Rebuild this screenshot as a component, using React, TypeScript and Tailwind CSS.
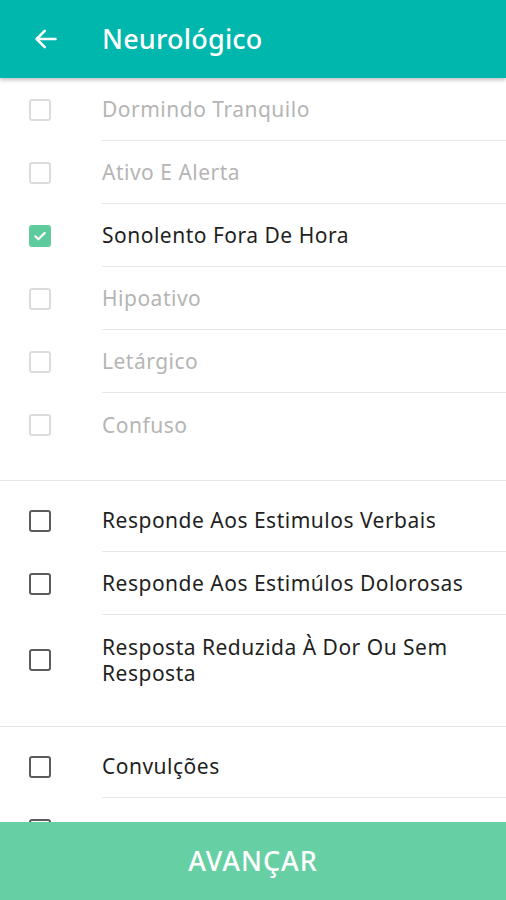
import React, { useState } from 'react';

type Item = { label: string; disabled?: boolean; checked?: boolean; tall?: boolean };

const GROUPS: Item[][] = [
  [
    { label: 'Dormindo Tranquilo', disabled: true },
    { label: 'Ativo E Alerta', disabled: true },
    { label: 'Sonolento Fora De Hora', checked: true },
    { label: 'Hipoativo', disabled: true },
    { label: 'Letárgico', disabled: true },
    { label: 'Confuso', disabled: true },
  ],
  [
    { label: 'Responde Aos Estimulos Verbais' },
    { label: 'Responde Aos Estimúlos Dolorosas' },
    { label: 'Resposta Reduzida À Dor Ou Sem Resposta', tall: true },
  ],
  [{ label: 'Convulções' }, { label: 'Agitação' }],
];

const Checkbox: React.FC<{ checked: boolean; disabled?: boolean }> = ({ checked, disabled }) => {
  if (checked) {
    return (
      <div className="w-[22px] h-[22px] rounded-[3px] bg-[#5fcb9c] flex items-center justify-center">
        <svg width="16" height="16" viewBox="0 0 24 24" fill="none" stroke="white" strokeWidth="3.2" strokeLinecap="round" strokeLinejoin="round">
          <path d="M5 12.5l4.5 4.5L19 7.5" />
        </svg>
      </div>
    );
  }
  return (
    <div
      className={
        disabled
          ? 'w-[22px] h-[22px] rounded-[3px] border-2 border-[#dcdcdc]'
          : 'w-[22px] h-[22px] rounded-[3px] border-2 border-[#5c5c5c]'
      }
    />
  );
};

const App: React.FC = () => {
  const [checked, setChecked] = useState<Record<string, boolean>>({ 'Sonolento Fora De Hora': true });

  return (
    <div className="h-[900px] w-full flex flex-col bg-white overflow-hidden" style={{ fontFamily: '"Noto Sans", "Open Sans", sans-serif' }}>
      <div className="h-[78px] shrink-0 bg-[#00b7ae] flex items-center shadow-[0_2px_4px_rgba(0,0,0,0.25)] relative z-10">
        <div className="w-[102px] pl-[31px] flex items-center">
          <svg width="30" height="30" viewBox="0 0 24 24" fill="none" stroke="white" strokeWidth="2.1" strokeLinecap="round" strokeLinejoin="round">
            <path d="M19.5 12H5" />
            <path d="M11 5.5L4.5 12l6.5 6.5" />
          </svg>
        </div>
        <h1 className="text-white text-[27px] font-medium tracking-[0.2px]">Neurológico</h1>
      </div>

      <div className="flex-1 overflow-hidden">
        {GROUPS.map((group, gi) => (
          <div key={gi} className={gi === 0 ? 'pb-[24px] border-b border-[#e8e8e8]' : 'pt-[8px] pb-[21px] border-b border-[#e8e8e8]'}>
            {group.map((item, ii) => {
              const isChecked = !!checked[item.label];
              return (
                <div
                  key={item.label}
                  onClick={() => !item.disabled && setChecked({ ...checked, [item.label]: !isChecked })}
                  className={item.tall ? 'h-[90px] flex items-center cursor-pointer' : 'h-[63px] flex items-center cursor-pointer'}
                >
                  <div className="w-[102px] pl-[29px] flex items-center shrink-0">
                    <Checkbox checked={isChecked} disabled={item.disabled} />
                  </div>
                  <div
                    className={
                      ii < group.length - 1
                        ? 'flex-1 h-full flex items-center border-b border-[#e8e8e8] pr-4'
                        : 'flex-1 h-full flex items-center pr-4'
                    }
                  >
                    <span
                      className={
                        item.disabled
                          ? 'text-[21px] leading-[26px] tracking-[0.5px] text-[#b5b5b5]'
                          : 'text-[21px] leading-[26px] tracking-[0.5px] text-[#1f1f1f]'
                      }
                    >
                      {item.label}
                    </span>
                  </div>
                </div>
              );
            })}
          </div>
        ))}
      </div>

      <button className="h-[78px] shrink-0 w-full bg-[#66cfa3] text-white text-[27px] font-medium tracking-[1px]">
        AVANÇAR
      </button>
    </div>
  );
};

export default App;
